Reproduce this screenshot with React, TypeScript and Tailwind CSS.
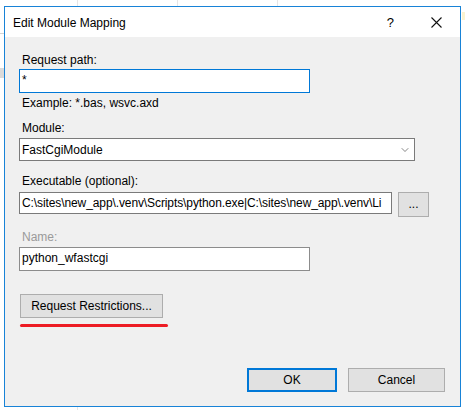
import { ChevronDown } from "lucide-react";

const font = { fontFamily: '"Segoe UI", "Liberation Sans", Arial, sans-serif' };

const Label = ({ children, className = "" }: { children: React.ReactNode; className?: string }) => (
  <div className={`pl-[3px] h-4 leading-4 text-[12px] ${className}`}>{children}</div>
);

export default function App() {
  return (
    <div className="relative w-[465px] h-[410px] bg-white overflow-hidden text-black" style={font}>
      {/* desktop behind the dialog */}
      <div className="absolute left-[77px] top-0 w-px h-[6px] bg-[#e6e6e6]" />
      <div className="absolute left-[177px] top-0 w-px h-[6px] bg-[#e6e6e6]" />
      <div className="absolute left-[277px] top-0 w-px h-[6px] bg-[#e6e6e6]" />
      <div className="absolute left-[77px] top-[407px] w-px h-[3px] bg-[#e6e6e6]" />
      <div className="absolute left-0 top-[33px] w-[4px] h-px bg-[#d4d4d4]" />
      <div className="absolute left-0 top-[68px] w-[4px] h-[10px] bg-[#dadada]" />
      <div className="absolute left-[462px] top-[12px] w-[3px] h-[8px] bg-[#fbf3d0]" />

      <div className="ml-[4px] mt-[6px] w-[457px] h-[401px] border border-[#1883d7] flex flex-col">
        {/* title bar */}
        <div className="h-[30px] bg-white flex items-center pl-[8px] text-[12px]">
          <span className="flex-1 pt-[2px]">Edit Module Mapping</span>
          <span className="text-[13px] mr-[37px] pt-[1px]">?</span>
          <svg width="11" height="11" viewBox="0 0 11 11" className="mr-[18px]">
            <path d="M0.5 0.5 L10.5 10.5 M10.5 0.5 L0.5 10.5" stroke="#111" strokeWidth="1.1" />
          </svg>
        </div>

        {/* body */}
        <div className="flex-1 bg-[#f0f0f0] flex flex-col pl-[14px] pb-[14px] text-[12px]">
          <Label className="mt-[15px]">Request path:</Label>
          <div className="mt-px w-[291px] h-[24px] bg-white border border-[#0078d7] pl-[2px] leading-[20px]">*</div>
          <Label className="mt-[2px]">Example: *.bas, wsvc.axd</Label>

          <Label className="mt-[9px]">Module:</Label>
          <div className="mt-[2px] w-[396px] h-[23px] bg-white border border-[#7a7a7a] flex items-center pl-[2px] pr-[3px]">
            <span className="flex-1">FastCgiModule</span>
            <ChevronDown size={12} strokeWidth={1.3} color="#444" />
          </div>

          <Label className="mt-[12px]">Executable (optional):</Label>
          <div className="mt-[3px] flex items-start gap-[6px]">
            <div className="w-[373px] h-[22px] bg-white border border-[#7a7a7a] pl-[2px] leading-[20px] overflow-hidden whitespace-nowrap tracking-[-0.1px]">
              C:\sites\new_app\.venv\Scripts\python.exe|C:\sites\new_app\.venv\Li
            </div>
            <div className="w-[31px] h-[25px] bg-[#e1e1e1] border border-[#adadad] flex items-center justify-center leading-none pb-[2px]">
              ...
            </div>
          </div>

          <Label className="mt-[12px] text-[#9a9a9a]">Name:</Label>
          <div className="mt-[2px] w-[291px] h-[24px] bg-white border border-[#8c8c8c] pl-[2px] leading-[21px]">
            python_wfastcgi
          </div>

          <div className="mt-[23px] ml-px w-[143px] h-[24px] bg-[#e1e1e1] border border-[#adadad] flex items-center justify-center">
            Request Restrictions...
          </div>
          <div className="mt-[6px] ml-px w-[148px] h-[3px] rounded-full bg-[#ed1c24]" />

          <div className="mt-auto flex justify-end gap-[11px] pr-[15px]">
            <div className="w-[90px] h-[24px] bg-[#e1e1e1] border-2 border-[#0078d7] flex items-center justify-center">OK</div>
            <div className="w-[97px] h-[24px] bg-[#e1e1e1] border border-[#adadad] flex items-center justify-center">Cancel</div>
          </div>
        </div>
      </div>
    </div>
  );
}
